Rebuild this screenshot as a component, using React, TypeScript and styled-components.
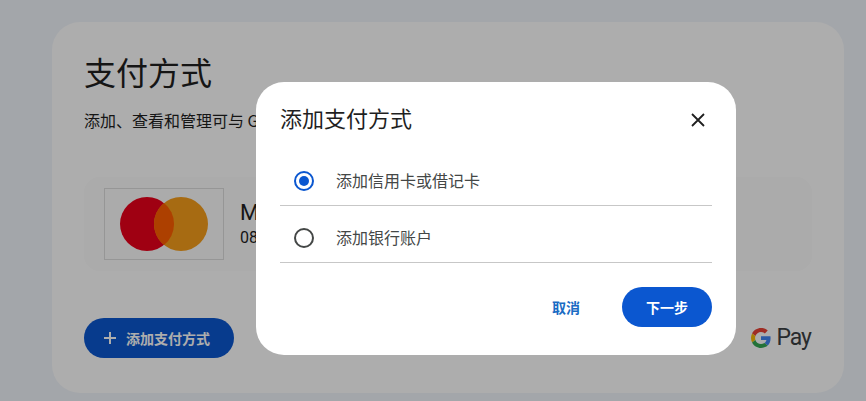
import React from "react";
import styled, { createGlobalStyle } from "styled-components";

const GlobalStyle = createGlobalStyle`
  html, body {
    margin: 0;
    padding: 0;
    height: 100%;
    overflow: hidden;
  }
  body {
    font-family: "Noto Sans CJK SC", Roboto, "Noto Sans", sans-serif;
    color: #1f1f1f;
  }
`;

const Page = styled.div`
  position: relative;
  width: 866px;
  height: 401px;
  box-sizing: border-box;
  padding: 22px 22px 8px 52px;
  background: #f1f5fb;
  overflow: hidden;
`;

const Card = styled.section`
  display: flex;
  flex-direction: column;
  height: 371px;
  box-sizing: border-box;
  padding: 26px 32px 0;
  background: #ffffff;
  border-radius: 28px;
`;

const PageTitle = styled.h1`
  margin: 0;
  font-size: 32px;
  font-weight: 400;
  line-height: 46px;
`;

const PageSubtitle = styled.p`
  margin: 14px 0 0;
  font-size: 16px;
  line-height: 24px;
  white-space: nowrap;
`;

const MethodRow = styled.div`
  display: flex;
  align-items: center;
  gap: 16px;
  height: 94px;
  margin-top: 45px;
  padding: 0 20px;
  border-radius: 16px;
  background: #fcfcfc;
`;

const CardLogoBox = styled.div`
  display: flex;
  align-items: center;
  justify-content: center;
  width: 118px;
  height: 70px;
  border: 1px solid #dedede;
`;

const MethodText = styled.div`
  display: flex;
  flex-direction: column;
`;

const MethodName = styled.div`
  font-family: Roboto, sans-serif;
  font-size: 22px;
  line-height: 28px;
`;

const MethodExpiry = styled.div`
  font-family: Roboto, sans-serif;
  font-size: 16px;
  line-height: 22px;
`;

const CardFooter = styled.div`
  display: flex;
  align-items: center;
  justify-content: space-between;
  margin-top: 47px;
`;

const AddButton = styled.button`
  display: flex;
  align-items: center;
  gap: 9px;
  width: 150px;
  height: 40px;
  box-sizing: border-box;
  padding: 0 0 0 19px;
  border: 0;
  border-radius: 20px;
  background: #0b57d0;
  color: #ffffff;
  font: 700 14px "Noto Sans CJK SC", sans-serif;
`;

const GooglePay = styled.div`
  display: flex;
  align-items: center;
  gap: 5px;
  margin-right: 1px;
  color: #3c4043;
  font-family: Roboto, sans-serif;
  font-size: 23px;
  line-height: 30px;
  letter-spacing: -1px;
`;

const Scrim = styled.div`
  position: absolute;
  inset: 0;
  padding: 82px 0 0 256px;
  background: rgba(0, 0, 0, 0.32);
`;

const Dialog = styled.div`
  display: flex;
  flex-direction: column;
  width: 480px;
  height: 273px;
  box-sizing: border-box;
  padding: 0 24px;
  background: #ffffff;
  border-radius: 28px;
`;

const DialogHeader = styled.div`
  display: flex;
  align-items: flex-start;
  justify-content: space-between;
  height: 67px;
`;

const DialogTitle = styled.h2`
  margin: 19px 0 0;
  font-size: 22px;
  font-weight: 400;
  line-height: 32px;
`;

const CloseButton = styled.button`
  display: flex;
  padding: 0;
  margin: 31px 7px 0 0;
  border: 0;
  background: none;
`;

const OptionRow = styled.label`
  display: flex;
  align-items: center;
  gap: 22px;
  height: 57px;
  box-sizing: border-box;
  padding: 7px 0 0 14px;
  border-bottom: 1px solid #c7c7c7;
  font-size: 16px;
  color: #444746;
`;

const OptionLabel = styled.span`
  margin-top: -2px;
`;

const Radio = styled.span<{ $checked?: boolean }>`
  display: flex;
  align-items: center;
  justify-content: center;
  width: 20px;
  height: 20px;
  box-sizing: border-box;
  border-radius: 50%;
  border: 2px solid ${(p) => (p.$checked ? "#0b57d0" : "#444746")};

  &::after {
    content: "";
    display: ${(p) => (p.$checked ? "block" : "none")};
    width: 10px;
    height: 10px;
    border-radius: 50%;
    background: #0b57d0;
  }
`;

const DialogActions = styled.div`
  display: flex;
  align-items: center;
  justify-content: flex-end;
  gap: 17px;
  margin-top: 24px;
`;

const TextButton = styled.button`
  width: 78px;
  height: 40px;
  padding: 0;
  border: 0;
  background: none;
  color: #1a6bc4;
  font: 700 14px "Noto Sans CJK SC", sans-serif;
`;

const PrimaryButton = styled.button`
  width: 90px;
  height: 40px;
  padding: 0;
  border: 0;
  border-radius: 20px;
  background: #0b57d0;
  color: #ffffff;
  font: 700 14px "Noto Sans CJK SC", sans-serif;
`;

const MastercardLogo = () => (
  <svg width="88" height="54" viewBox="0 0 88 54">
    <circle cx="27" cy="27" r="27" fill="#eb001b" />
    <circle cx="61" cy="27" r="27" fill="#f79e1b" />
    <path d="M44 6a27 27 0 0 1 0 42a27 27 0 0 1 0-42z" fill="#ff5f00" />
  </svg>
);

const GoogleG = () => (
  <svg width="20" height="20" viewBox="0 0 48 48">
    <path fill="#ea4335" d="M24 9.5c3.5 0 6.7 1.2 9.2 3.6l6.9-6.9C35.9 2.4 30.5 0 24 0 14.6 0 6.5 5.4 2.6 13.2l8 6.2C12.5 13.7 17.800 9.500 24 9.500z" />
    <path fill="#4285f4" d="M47 24.500c0-1.600-.1-3.100-.4-4.500H24v9h12.900c-.6 3-2.200 5.500-4.700 7.200l7.700 6C44.400 38 47 31.900 47 24.500z" />
    <path fill="#fbbc05" d="M10.600 28.600c-.5-1.400-.8-3-.8-4.600s.3-3.200.8-4.600l-8-6.200C.9 16.500 0 20.100 0 24s.9 7.500 2.600 10.800l8-6.200z" />
    <path fill="#34a853" d="M24 48c6.500 0 11.900-2.100 15.900-5.800l-7.700-6c-2.200 1.500-4.900 2.300-8.200 2.300-6.200 0-11.500-4.200-13.400-9.900l-8 6.200C6.500 42.600 14.600 48 24 48z" />
  </svg>
);

const PlusIcon = () => (
  <svg width="14" height="14" viewBox="0 0 14 14">
    <path d="M7 1v12M1 7h12" stroke="#ffffff" strokeWidth="2" fill="none" />
  </svg>
);

const CloseIcon = () => (
  <svg width="14" height="14" viewBox="0 0 14 14">
    <path d="M1 1l12 12M13 1L1 13" stroke="#1f1f1f" strokeWidth="1.800" fill="none" />
  </svg>
);

const App = () => {
  return (
    <Page>
      <GlobalStyle />
      <Card>
        <PageTitle>支付方式</PageTitle>
        <PageSubtitle>添加、查看和管理可与 Google 账号搭配使用的付款方式</PageSubtitle>
        <MethodRow>
          <CardLogoBox>
            <MastercardLogo />
          </CardLogoBox>
          <MethodText>
            <MethodName>Mastercard</MethodName>
            <MethodExpiry>08/27</MethodExpiry>
          </MethodText>
        </MethodRow>
        <CardFooter>
          <AddButton>
            <PlusIcon />
            添加支付方式
          </AddButton>
          <GooglePay>
            <GoogleG />
            Pay
          </GooglePay>
        </CardFooter>
      </Card>
      <Scrim>
        <Dialog>
          <DialogHeader>
            <DialogTitle>添加支付方式</DialogTitle>
            <CloseButton>
              <CloseIcon />
            </CloseButton>
          </DialogHeader>
          <OptionRow>
            <Radio $checked />
            <OptionLabel>添加信用卡或借记卡</OptionLabel>
          </OptionRow>
          <OptionRow>
            <Radio />
            <OptionLabel>添加银行账户</OptionLabel>
          </OptionRow>
          <DialogActions>
            <TextButton>取消</TextButton>
            <PrimaryButton>下一步</PrimaryButton>
          </DialogActions>
        </Dialog>
      </Scrim>
    </Page>
  );
};

export default App;
